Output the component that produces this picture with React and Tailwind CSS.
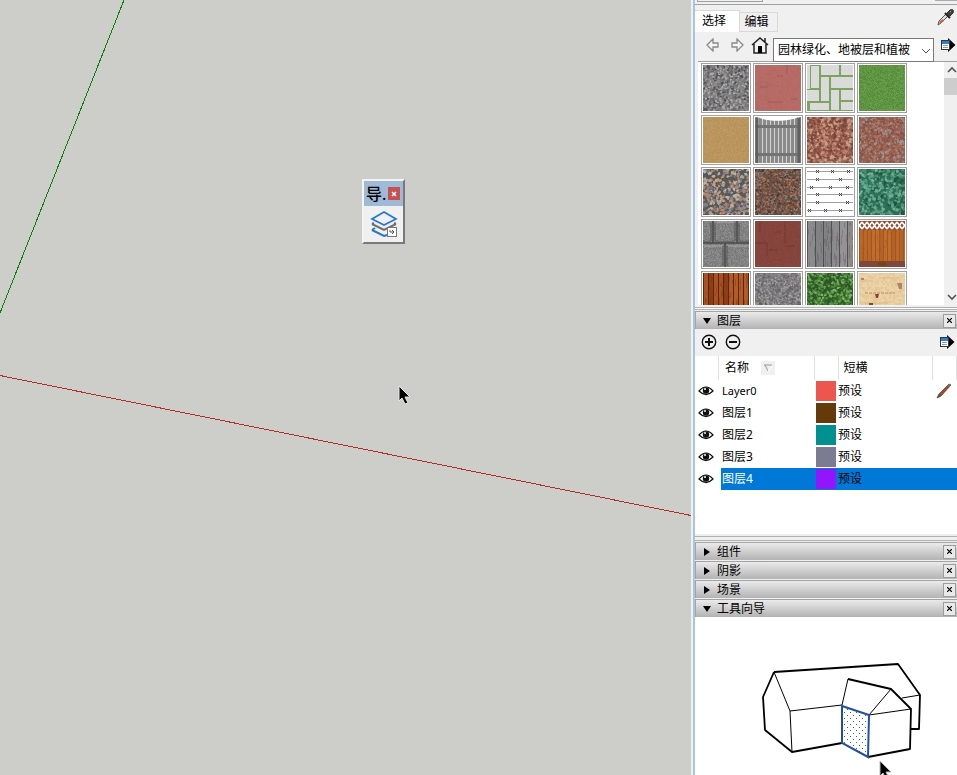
import React, { useState } from 'react';

const FONT = "font-['Noto_Sans','Noto_Sans_CJK_SC',sans-serif]";

// small seeded generator so that the swatches look the same on each render
const makeRandom = (seed) => {
  let s = seed;
  return () => {
    s = (s * 1664525 + 1013904223) % 4294967296;
    return s / 4294967296;
  };
};

const Grain = ({ seed, colors, cell = 1, size = 46 }) => {
  const rand = makeRandom(seed);
  const paths = colors.map(() => '');
  for (let y = 0; y < size; y += cell) {
    for (let x = 0; x < size; x += cell) {
      const i = Math.floor(rand() * colors.length);
      paths[i] += `M${x} ${y}h${cell}v${cell}h-${cell}z`;
    }
  }
  return (
    <g shapeRendering="crispEdges">
      {paths.map((d, i) => <path key={i} d={d} fill={colors[i]} />)}
    </g>
  );
};

// irregular chips, for gravel and leaves
const Chips = ({ seed, colors, count, r }) => {
  const rand = makeRandom(seed);
  const chips = [];
  for (let i = 0; i < count; i++) {
    const x = rand() * 46;
    const y = rand() * 46;
    const p = [0, 1, 2, 3, 4].map((k) => {
      const a = k * 1.257 + rand();
      const d = r * (0.5 + rand() * 0.7);
      return `${(x + Math.cos(a) * d).toFixed(1)},${(y + Math.sin(a) * d).toFixed(1)}`;
    });
    chips.push(<polygon key={i} points={p.join(' ')} fill={colors[Math.floor(rand() * colors.length)]} />);
  }
  return <g>{chips}</g>;
};

// short vertical streaks of shade laid over the boards
const Streaks = ({ seed, count, color }) => {
  const rand = makeRandom(seed);
  let d = '';
  for (let i = 0; i < count; i++) {
    d += `M${Math.floor(rand() * 46)} ${Math.floor(rand() * 44)}h1v${2 + Math.floor(rand() * 8)}h-1z`;
  }
  return <path d={d} fill={color} />;
};

const Boards = ({ seed, colors, step, gap, streak }) => {
  const rand = makeRandom(seed);
  const list = [];
  for (let x = 0; x < 46; x += step) {
    list.push(<rect key={x} x={x} width={step} height="46" fill={colors[Math.floor(rand() * colors.length)]} />);
    list.push(<path key={`g${x}`} d={`M${x + 0.5} 0v46`} stroke={gap} />);
  }
  return (
    <g>
      {list}
      <Streaks seed={seed + 50} count={70} color={streak} />
    </g>
  );
};

const Pavers = () => (
  <g>
    <rect width="46" height="46" fill="#7ca45f" />
    <g fill="#dadada">
      <rect x="0" y="0" width="3" height="24" /><rect x="4" y="1" width="8" height="22" />
      <rect x="14" y="0" width="18" height="10" /><rect x="34" y="0" width="12" height="10" />
      <rect x="14" y="12" width="8" height="24" /><rect x="24" y="12" width="22" height="11" />
      <rect x="0" y="25" width="12" height="11" /><rect x="24" y="25" width="8" height="20" />
      <rect x="34" y="25" width="12" height="10" /><rect x="3" y="38" width="19" height="7" />
      <rect x="34" y="37" width="12" height="8" />
    </g>
  </g>
);

const Picket = () => (
  <g>
    <rect width="46" height="46" fill="#d4d4d4" />
    {[0, 4, 8, 12, 16, 20, 24, 28, 32, 36, 40, 44].map((x) => (
      <rect key={x} x={x} width="3" height="46" fill="#8a8a8a" />
    ))}
    <path d="M0 8h46v3H0zM0 36h46v3H0z" fill="#747474" />
    <path d="M2 1v45M44 1v45" stroke="#606060" strokeWidth="3" />
    <path d="M3 0h40C34 5 12 5 3 0" fill="#fff" />
  </g>
);

const Wire = () => (
  <g>
    <rect width="46" height="46" fill="#fff" />
    {[2, 10, 18, 25, 33, 41].map((y, i) => (
      <g key={y}>
        <path d={`M0 ${y + 0.5}h46`} stroke="#a0a0a0" />
        {[[10, 25, 41], [10, 33], [4, 23, 40], [10, 33], [10, 40], [2, 18, 33]][i].map((x) => (
          <path key={x} d={`M${x - 1} ${y - 1}l3 3m0-3l-3 3`} stroke="#444" />
        ))}
      </g>
    ))}
  </g>
);

const Stones = () => (
  <g>
    <Grain seed={41} colors={['#858585', '#777777', '#8f8f8f', '#7f7f7f']} />
    <path d="M0 22h46M10 0v22M34 0v22M22 22v24" stroke="#4a4a4a" strokeWidth="1.5" fill="none" />
    <path d="M0 20q5 2 8 0M12 20q11 2 20 0M36 20q5 2 10 0M8 2v18M12 2v18M32 2v18M36 2v18M20 25v20M24 25v20" stroke="#555" strokeOpacity="0.5" strokeWidth="2" fill="none" />
    <path d="M1 25h18M25 25h20M14 1h17" stroke="#a8a8a8" fill="none" />
  </g>
);

const Brick = ({ seed, colors, line }) => (
  <g>
    <Grain seed={seed} colors={colors} />
    <path d="M5 0v11M12 22v13M30 0v22M0 22h12M14 29h9M30 25h10M20 11h6" stroke={line} strokeOpacity="0.5" fill="none" />
  </g>
);

const GardenFence = () => (
  <g>
    <Boards seed={8} colors={['#b9682a', '#b26325', '#bf6e2e']} step={4} gap="#a2571e" streak="#a85c2060" />
    <rect width="46" height="9" fill="#a2442a" />
    {[0, 5, 10, 15, 20, 25, 30, 35, 40, 45].map((x) => (
      <path key={x} d={`M${x - 2} 1l5 7m0-7l-5 7`} stroke="#fff" strokeWidth="1.6" />
    ))}
    <rect y="40" width="46" height="6" fill="#80473a" />
    <ellipse cx="23" cy="43" rx="5" ry="2" fill="#7a4318" />
  </g>
);

const materials = [
  { name: '灰色碎石', art: <><rect width="46" height="46" fill="#77787a" /><Chips seed={1} count={900} r={1.4} colors={['#8a8888', '#66676a', '#b2aeac', '#7c7e80', '#4e4e51', '#9b9692']} /></> },
  { name: '红色铺面', art: <><Grain seed={2} cell={2} colors={['#b56a66', '#b36864', '#b76c68', '#b66b67']} /><path d="M5 22h8M22 11h6M13 37h14M36 34h6M32 0v8" stroke="#965a4d" strokeOpacity="0.7" /></> },
  { name: '草缝石板', art: <Pavers /> },
  { name: '草坪', art: <Grain seed={3} colors={['#5d9440', '#548a39', '#659b48', '#5a903e', '#6b9f4a']} /> },
  { name: '沙地', art: <Grain seed={4} colors={['#bb955f', '#b9925a', '#c09a62', '#b69059', '#be9861']} /> },
  { name: '灰色栅栏', art: <Picket /> },
  { name: '红褐岩石', art: <><rect width="46" height="46" fill="#90594c" /><Chips seed={5} count={700} r={2} colors={['#a66c58', '#c5937a', '#7c463b', '#b47d68', '#8d5245', '#c99f86']} /><path d="M6 14q-4 14 8 26M24 4q8 10 2 20t4 16M38 2q-6 12 2 22" fill="none" stroke="#6d3a30" strokeWidth="2" strokeOpacity="0.6" /></> },
  { name: '红色碎石', art: <><rect width="46" height="46" fill="#97604f" /><Chips seed={6} count={900} r={1.3} colors={['#9d6555', '#7f4d42', '#b07868', '#8f6158', '#a97c6e', '#8b5142', '#9a9a9c']} /></> },
  { name: '彩色砾石', art: <><rect width="46" height="46" fill="#5a5855" /><Chips seed={7} count={420} r={2} colors={['#8c8c8d', '#a6a19d', '#c69c72', '#777b80', '#58565a', '#b3836a', '#bcb7b1']} /></> },
  { name: '棕色砾石', art: <><rect width="46" height="46" fill="#6b4f42" /><Chips seed={8} count={1000} r={1.2} colors={['#7d4e3b', '#3f3838', '#b07550', '#78777a', '#8d5a43', '#564b48', '#9d8778']} /></> },
  { name: '铁丝网', art: <Wire /> },
  { name: '常春藤', art: <><rect width="46" height="46" fill="#2c6b54" /><Chips seed={9} count={380} r={2} colors={['#5aa286', '#47906f', '#72b197', '#2f7059', '#55a082', '#1d5540']} /></> },
  { name: '石块', art: <Stones /> },
  { name: '深红砖', art: <Brick seed={10} colors={['#87443b', '#84423a', '#8a473e', '#81433b']} line="#5d302b" /> },
  { name: '灰色木板', art: <Boards seed={11} colors={['#8b8b8d', '#828284', '#959395', '#8d8988']} step={8} gap="#505052" streak="#5c5c6066" /> },
  { name: '木围栏', art: <GardenFence /> },
  { name: '红木板', art: <Boards seed={12} colors={['#a9511f', '#923c13', '#b35b27', '#7d3717']} step={5} gap="#55270e" streak="#6d2c1055" /> },
  { name: '细碎石', art: <><rect width="46" height="46" fill="#7d7b7d" /><Chips seed={13} count={1000} r={1.2} colors={['#858385', '#68676a', '#9c9899', '#5f5f63', '#aaa4a3']} /></> },
  { name: '灌木', art: <><rect width="46" height="46" fill="#30562a" /><Chips seed={14} count={600} r={1.6} colors={['#549340', '#67a852', '#3e7430', '#2e5725', '#7bb563', '#488438']} /></> },
  { name: '浅色木纹', art: <><Grain seed={15} cell={2} colors={['#e7cc9e', '#ebd0a3', '#e4c796', '#ecd3a9']} /><path d="M0 8h14M20 5h20M5 30h24" stroke="#d9bb8a" /><path d="M6 20h30" stroke="#b8905f" strokeDasharray="3 1" /><path d="M16 21h4l-1 4h-2zM10 30h4v3h-4z" fill="#89442f" /><path d="M38 10h5v6h-3zM2 5h3v2H2z" fill="#b08468" /></> },
];

const layerRows = [
  { name: 'Layer0', color: 'bg-[#ec564f]' },
  { name: '图层1', color: 'bg-[#643a0b]' },
  { name: '图层2', color: 'bg-[#009090]' },
  { name: '图层3', color: 'bg-[#7b7b91]' },
  { name: '图层4', color: 'bg-[#9216fb]' },
];

const Pointer = ({ className }) => (
  <svg className={className} width="14" height="20" viewBox="0 0 14 20">
    <path d="M1 1v15l3-3 3 6 3-1-3-6h5z" fill="#000" stroke="#e8e8e8" />
  </svg>
);

const Eye = () => (
  <svg width="16" height="12" viewBox="0 0 16 12" className="block">
    <path d="M1 6Q8-2 15 6Q8 13 1 6z" fill="#fff" stroke="#111" strokeWidth="1.2" />
    <circle cx="8" cy="5.5" r="3.2" fill="#111" />
    <circle cx="7" cy="4" r="1" fill="#fff" />
  </svg>
);

const DetailsIcon = () => (
  <svg width="15" height="14" viewBox="0 0 15 14" className="block">
    <path d="M7 0l7.5 7L7 14V11H4V3h3z" fill="#000" />
    <rect x="0.5" y="2.5" width="8" height="9" fill="#fff" stroke="#333" />
    <path d="M1 3h7v3H1z" fill="#2483d8" />
    <path d="M2 7.5h5M2 9.5h5" stroke="#999" />
  </svg>
);

const Dropper = () => (
  <svg width="17" height="17" viewBox="0 0 17 17" className="block">
    <path d="M1 16l1-4 7-7 2 2-7 7z" fill="#e4ded6" stroke="#555" />
    <path d="M2 15l1-3 3-2 1 2-3 2z" fill="#c66a35" />
    <path d="M8 4l5 5" stroke="#222" strokeWidth="2.2" />
    <path d="M10 4l3-3q2-1 3 0t0 3l-3 3z" fill="#444" stroke="#2c2c2c" />
    <path d="M13 3l1-1" stroke="#aaa" />
  </svg>
);

const Pencil = () => (
  <svg width="16" height="16" viewBox="0 0 16 16" className="block">
    <path d="M1 15l2-4L13 1l2 1L5 13z" fill="#a34a27" stroke="#543628" strokeWidth="0.7" />
    <path d="M1 15l2-4 2 2z" fill="#555" />
    <path d="M12 2l2-1 1 1-2 2z" fill="#777" />
  </svg>
);

const PanelHeader = ({ title, open }) => (
  <div className="flex h-[18px] items-center border-t border-l border-[#a3a3a3] bg-linear-to-b from-[#ebebeb] to-[#b3b3b3] pr-px pl-[7px]">
    <button className="flex flex-1 items-center gap-1 text-left text-xs leading-4" aria-expanded={open}>
      <svg width="9" height="8" viewBox="0 0 9 8">
        {open ? <path d="M0 1h8L4 7z" /> : <path d="M1 0v8l6-4z" />}
      </svg>
      <span className="pl-px">{title}</span>
    </button>
    <button aria-label={`关闭${title}`} className="flex h-[14px] w-[13px] items-center justify-center border border-[#9c9c9c] bg-[#e9e9e9]">
      <svg width="5" height="5" viewBox="0 0 5 5"><path d="M0 0l5 5M5 0L0 5" stroke="#000" strokeWidth="1.2" /></svg>
    </button>
  </div>
);

const FloatingToolbar = () => (
  <div className="absolute top-[179px] left-[362px] w-[43px] border-2 border-[#f4f4f4] border-r-[#77797d] border-b-[#77797d] bg-[#9fbad6]">
    <div className="flex h-[25px] items-center gap-0.5 pl-0.5">
      <span className="w-5 text-base leading-5 font-medium whitespace-nowrap">导.</span>
      <button aria-label="关闭" className="flex h-[13px] w-3 items-center justify-center bg-[#c75050]">
        <svg width="6" height="6" viewBox="0 0 6 6"><path d="M1 1l4 4M5 1L1 5" stroke="#fff" strokeWidth="1.5" /></svg>
      </button>
    </div>
    <button aria-label="导入图层" className="flex h-9 w-full items-center justify-center bg-[#f0f0f0]">
      <svg width="28" height="28" viewBox="0 0 28 28" fill="none">
        <path d="M2 20l12 6 3-1M2 20l3-2" stroke="#2478d0" strokeWidth="2" />
        <path d="M2 14l12 6 12-6M2 14l2-1M26 14l-2-1" stroke="#6e6e6e" strokeWidth="2" />
        <path d="M14 2l12 7-12 6L2 9z" fill="#f0f0f0" stroke="#2478d0" strokeWidth="1.7" />
        <rect x="17.5" y="17.5" width="9" height="9" fill="#fff" stroke="#777" />
        <path d="M20 20v2h4m-2-2l2 2-2 2" stroke="#555" />
      </svg>
    </button>
  </div>
);

const Viewport = () => (
  <main className="relative min-w-0 flex-1 overflow-hidden bg-[#cdcec9]">
    <svg className="absolute top-0 left-0" width="691" height="775" viewBox="0 0 691 775">
      <path d="M124 0L0 313" stroke="#0a820a" strokeWidth="1" shapeRendering="crispEdges" />
      <path d="M0 375.5L691 515.5" stroke="#b03028" strokeWidth="1" shapeRendering="crispEdges" />
    </svg>
    <FloatingToolbar />
    <Pointer className="absolute top-[385px] left-[398px]" />
  </main>
);

const MaterialsPanel = () => {
  const [tab, setTab] = useState('select');
  return (
    <section className="bg-[#f0f0f0]">
      <div className="flex h-[5px] items-start justify-between border-b border-[#a0a0a0] pl-0.5">
        <span className="h-0.5 w-[66px] border border-t-0 border-[#a0a0a0]"></span>
        <span className="h-px w-[22px] bg-[#a9abb0]"></span>
      </div>
      <div className="flex h-[27px] items-end justify-between">
        <div className="flex items-end text-xs leading-4">
          <button onClick={() => setTab('select')} aria-pressed={tab === 'select'} className="h-[22px] w-[45px] border-t border-r border-[#d9d9d9] bg-white pr-1.5 pb-0.5">选择</button>
          <button onClick={() => setTab('edit')} aria-pressed={tab === 'edit'} className="h-5 w-[38px] border-t border-r border-b border-[#d9d9d9] pr-1">编辑</button>
        </div>
        <button aria-label="样品颜料" className="mr-[3px] mb-1.5"><Dropper /></button>
      </div>
      <div className="ml-[3px] flex h-[30px] items-center border-b border-[#a0a0a0] pl-2">
        <button aria-label="后退" className="mr-2.5 mb-1">
          <svg width="14" height="14" viewBox="0 0 14 14" className="block"><path d="M1 7l6-6v4h5v4H7v4z" fill="#f6f6f6" stroke="#888" strokeWidth="1.3" /></svg>
        </button>
        <button aria-label="前进" className="mr-[7px] mb-1">
          <svg width="14" height="14" viewBox="0 0 14 14" className="block"><path d="M13 7L7 1v4H2v4h5v4z" fill="#f6f6f6" stroke="#888" strokeWidth="1.3" /></svg>
        </button>
        <button aria-label="主页" className="mr-1 mb-1">
          <svg width="18" height="18" viewBox="0 0 18 18" className="block">
            <path d="M3 8v9h12V8M1 9l8-7 8 7M14 6V2" fill="none" stroke="#222" strokeWidth="1.5" />
            <path d="M7 10h4v7H7z" />
          </svg>
        </button>
        <div className="relative mt-1.5 min-w-0 flex-1">
          <select aria-label="材质库" className="block h-6 w-full appearance-none rounded-none border border-[#7a7a7a] bg-white pr-5 pl-1 text-xs leading-4">
            <option>园林绿化、地被层和植被</option>
          </select>
          <svg className="pointer-events-none absolute top-2.5 right-1" width="9" height="6" viewBox="0 0 9 6"><path d="M1 1l4 4 4-4" fill="none" stroke="#555" /></svg>
        </div>
        <button aria-label="详细信息" className="mr-px mb-1 ml-[7px]"><DetailsIcon /></button>
      </div>
      <div className="ml-[3px] flex h-[243px] overflow-hidden bg-white">
        <div className="flex-1 pt-px pl-[3px]">
          <div className="grid w-[206px] grid-cols-4 gap-0.5">
            {materials.map((m) => (
              <button key={m.name} aria-label={m.name} className="h-[50px] border border-[#a0a0a0] bg-white p-px">
                <svg viewBox="0 0 46 46" className="block h-full w-full">{m.art}</svg>
              </button>
            ))}
          </div>
        </div>
        <div className="flex w-[13px] flex-col items-center bg-[#f0f0f0]">
          <svg width="13" height="16" viewBox="0 0 13 16"><path d="M4 10l4-4 4 4" fill="none" stroke="#555" strokeWidth="1.7" /></svg>
          <div className="h-[17px] w-full bg-[#cdcdcd]"></div>
          <svg className="mt-auto" width="13" height="16" viewBox="0 0 13 16"><path d="M4 6l4 4 4-4" fill="none" stroke="#555" strokeWidth="1.7" /></svg>
        </div>
      </div>
      <div className="h-1.5 pt-0.5"><div className="h-[3px] border-y border-[#b0b0b0] bg-white"></div></div>
    </section>
  );
};

const LayersPanel = () => {
  const [selected, setSelected] = useState('图层4');
  return (
    <section>
      <PanelHeader title="图层" open />
      <div className="flex h-[27px] items-center gap-2 bg-[#f0f0f0] pr-0.5 pb-px pl-1.5">
        <button aria-label="添加图层">
          <svg width="16" height="16" viewBox="0 0 16 16" fill="none" stroke="#111" className="block"><circle cx="8" cy="8" r="6.7" strokeWidth="1.4" /><path d="M4 8h8M8 4v8" strokeWidth="2" /></svg>
        </button>
        <button aria-label="删除图层">
          <svg width="16" height="16" viewBox="0 0 16 16" fill="none" stroke="#111" className="block"><circle cx="8" cy="8" r="6.7" strokeWidth="1.4" /><path d="M4 8h8" strokeWidth="2" /></svg>
        </button>
        <button aria-label="详细信息" className="ml-auto"><DetailsIcon /></button>
      </div>
      <div className="h-[178px] bg-white">
        <table className="w-full table-fixed border-collapse text-left text-xs leading-4">
          <colgroup>
            <col className="w-[26px]" />
            <col className="w-[93px]" />
            <col className="w-6" />
            <col />
            <col className="w-6" />
          </colgroup>
          <thead>
            <tr className="h-6">
              <th className="p-0"><span className="block h-6 w-6 border-r border-[#e0e0e0]"></span></th>
              <th className="p-0 font-normal">
                <span className="flex items-center gap-3 pl-1">
                  名称
                  <svg width="14" height="14" viewBox="0 0 14 14"><rect width="14" height="14" fill="#f0f0f0" /><path d="M3 4h8M4 4l3 6" fill="none" stroke="#999" /><path d="M7 10l1 0 3-5" stroke="#fff" fill="none" /></svg>
                </span>
              </th>
              <th className="border-x border-[#e0e0e0] p-0"></th>
              <th className="p-0 pl-[5px] font-normal">短横</th>
              <th className="border-x border-[#e0e0e0] p-0"></th>
            </tr>
          </thead>
          <tbody>
            {layerRows.map((row, i) => {
              const cell = row.name === selected ? 'bg-[#0078d7]' : '';
              return (
                <tr key={row.name} className="h-[22px]" onClick={() => setSelected(row.name)}>
                  <td className="p-0 pl-[3px]"><button aria-label={`显示${row.name}`} className="block"><Eye /></button></td>
                  <td className={`p-0 pl-px ${cell} ${row.name === selected ? 'text-white' : ''} ${i === 0 ? 'text-[11px]' : ''}`}>{row.name}</td>
                  <td className={`p-0 pl-0.5 ${cell}`}><span className={`block h-5 w-5 ${row.color}`}></span></td>
                  <td className={`p-0 ${cell}`}>预设</td>
                  <td className={`p-0 pl-[3px] ${cell}`}>{i === 0 && <Pencil />}</td>
                </tr>
              );
            })}
          </tbody>
        </table>
      </div>
      <div className="h-2 bg-[#f0f0f0] pt-0.5"><div className="h-[5px] border-y border-[#b0b0b0]"></div></div>
    </section>
  );
};

const HouseDrawing = () => (
  <svg width="262" height="158" viewBox="695 617 262 158" className="block">
    <defs>
      <pattern id="dots" width="6" height="6" patternUnits="userSpaceOnUse">
        <path d="M1 1h1v1H1zM4 4h1v1H4z" fill="#4b5d83" />
      </pattern>
    </defs>
    <g fill="none" stroke="#000" strokeLinejoin="round">
      <path d="M774 672L898 664L920 695L919 729H911M774 672L763 697L765 730L792 752L842 743M848 679L891 689L911 709L910 749L868 757" strokeWidth="1.8" />
      <path d="M774 672L790 711L792 752M790 711L842 705L848 679M891 689L869 715L911 709M902 698L920 695" />
    </g>
    <path d="M842 706L869 715L868 757L842 743z" fill="url(#dots)" stroke="#204fa0" strokeWidth="2" />
    <g transform="translate(879 760)"><path d="M1 1v15l3-3 3 6 3-1-3-6h5z" stroke="#bbb" /></g>
  </svg>
);

const App = () => (
  <div className={`flex h-screen overflow-hidden text-black ${FONT}`}>
    <Viewport />
    <aside className="w-[266px] shrink-0 overflow-hidden border-l-2 border-[#f0f0f0]">
      <div className="min-h-screen border-l-2 border-[#a9c4e0] bg-white">
        <MaterialsPanel />
        <LayersPanel />
        <div className="flex flex-col gap-px bg-[#f0f0f0]">
          <PanelHeader title="组件" />
          <PanelHeader title="阴影" />
          <PanelHeader title="场景" />
          <PanelHeader title="工具向导" open />
        </div>
        <HouseDrawing />
      </div>
    </aside>
  </div>
);

export default App;
